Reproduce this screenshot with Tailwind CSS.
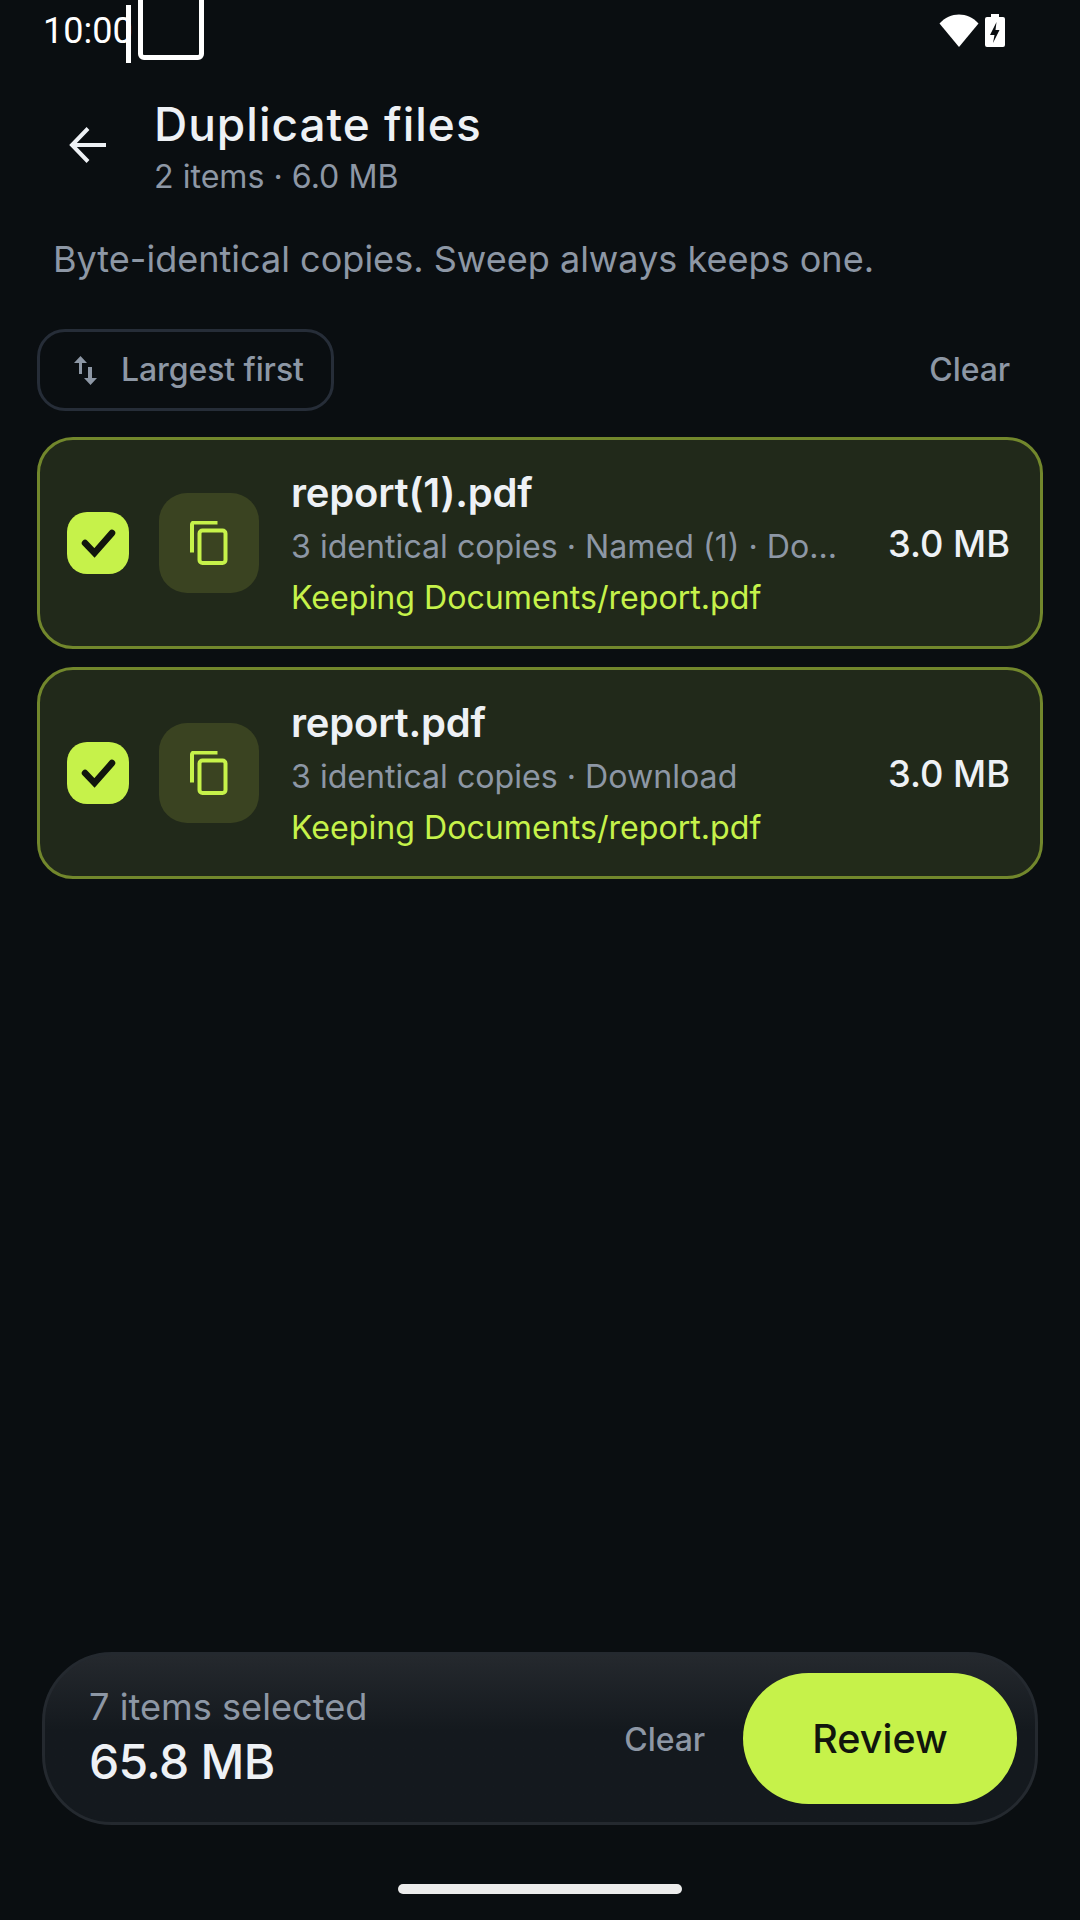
<!doctype html>
<html><head><meta charset="utf-8"><script src="https://cdn.jsdelivr.net/npm/@tailwindcss/browser@4"></script></head>
<body class="m-0">
<div class="relative flex flex-col w-[1080px] h-[1920px] overflow-hidden bg-[#0a0e11] font-['Inter',sans-serif]">
  <!-- status bar -->
  <div class="relative h-[76px] shrink-0 flex items-start justify-between pl-[43px] pr-[75px] text-white">
    <span class="font-['Roboto',sans-serif] text-[36px] leading-[62px]">10:00</span>
    <div class="absolute left-[126px] top-[5px] w-[5px] h-[58px] bg-white"></div>
    <div class="absolute left-[138px] top-[-10px] w-[66px] h-[70px] border-[5px] border-white rounded-[6px]"></div>
    <div class="flex items-start gap-[6px] pt-[14px]">
      <svg width="40" height="33" viewBox="0 0 40 33" class="block"><path d="M0.5 9.5 C11 -2.5 29 -2.5 39.5 9.5 L20 33 Z" fill="#fff"/></svg>
      <svg width="20" height="33" viewBox="0 0 20 33" class="block"><path d="M6 0H14V3H18A2 2 0 0 1 20 5V31A2 2 0 0 1 18 33H2A2 2 0 0 1 0 31V5A2 2 0 0 1 2 3H6Z" fill="#fff"/><path d="M11.5 8 L5 21 H9.5 L8 29 L14.5 16 H10.5 Z" fill="#0a0e11"/></svg>
    </div>
  </div>
  <!-- header -->
  <div class="flex items-start pt-[22px] shrink-0">
    <div class="w-[154px] shrink-0 pl-[69px] pt-[29px]">
      <svg width="37" height="37" viewBox="0 0 37 37" class="block"><path d="M37 18H3M19 1.500 L3 18 L19 34.500" fill="none" stroke="#eef1f5" stroke-width="4"/></svg>
    </div>
    <div class="flex flex-col">
      <span class="font-medium text-[46px] leading-[52px] text-[#eef1f5] tracking-[1px]">Duplicate files</span>
      <span class="mt-[7px] text-[32.15px] leading-[40px] text-[#8d97a5]">2 items · 6.0 MB</span>
    </div>
  </div>
  <p class="m-0 pl-[53px] pt-[40px] text-[36.05px] leading-[44px] text-[#8d97a5] shrink-0">Byte-identical copies. Sweep always keeps one.</p>
  <!-- controls -->
  <div class="flex items-center justify-between pl-[37px] pr-[70px] pt-[48px] shrink-0">
    <div class="flex items-center h-[82px] w-[297px] pl-[34px] gap-[24px] border-[3px] border-[#262d38] rounded-[28px]">
      <svg width="23" height="29" viewBox="0 0 23 29" class="block shrink-0"><path d="M0 7 L6.500 0 L13 7 H8 V18 H5 V7 Z M14 11 H18 V22 H23 L16.500 29 L10 22 H14 Z" fill="#8d97a5"/></svg>
      <span class="text-[32px] font-medium tracking-[-0.1px] text-[#8d97a5] whitespace-nowrap">Largest first</span>
    </div>
    <span class="text-[32px] font-medium tracking-[-0.1px] text-[#8d97a5]">Clear</span>
  </div>
  <!-- list -->
  <div class="flex flex-col gap-[18px] px-[37px] pt-[26px] shrink-0">
    <div class="flex items-center h-[212px] pl-[27px] pr-[30px] border-[3px] border-[#72872c] rounded-[36px] bg-[#21291a]">
      <div class="flex items-center justify-center w-[62px] h-[62px] rounded-[20px] bg-[#c6f24a] shrink-0">
        <svg width="38" height="30" viewBox="0 0 38 30" class="block"><path d="M6 15 L15.500 25 L33 5" fill="none" stroke="#11150d" stroke-width="6.500" stroke-linecap="round"/></svg>
      </div>
      <div class="flex items-center justify-center w-[100px] h-[100px] ml-[30px] rounded-[28px] bg-[#3a4321] shrink-0">
        <svg width="38" height="44" viewBox="0 0 38 44" class="block"><path d="M2 31.500V3.500A2 2 0 0 1 4 1.500H27.500" fill="none" stroke="#c6f24a" stroke-width="4"/><rect x="9.500" y="9.500" width="26" height="32.500" rx="3" fill="none" stroke="#c6f24a" stroke-width="4"/></svg>
      </div>
      <div class="flex flex-col min-w-0 flex-1 ml-[32px] pt-[5px]">
        <span class="text-[40px] leading-[50px] font-semibold text-[#eef1f5] tracking-[-0.2px]">report(1).pdf</span>
        <span class="mt-[3px] text-[32.15px] leading-[52px] text-[#8d97a5] whitespace-nowrap">3 identical copies · Named (1) · Do…</span>
        <span class="text-[32.15px] leading-[50px] text-[#c6f24a]">Keeping Documents/report.pdf</span>
      </div>
      <span class="pt-[3px] text-[36.3px] font-medium text-[#eef1f5] whitespace-nowrap shrink-0">3.0 MB</span>
    </div>
    <div class="flex items-center h-[212px] pl-[27px] pr-[30px] border-[3px] border-[#72872c] rounded-[36px] bg-[#21291a]">
      <div class="flex items-center justify-center w-[62px] h-[62px] rounded-[20px] bg-[#c6f24a] shrink-0">
        <svg width="38" height="30" viewBox="0 0 38 30" class="block"><path d="M6 15 L15.500 25 L33 5" fill="none" stroke="#11150d" stroke-width="6.500" stroke-linecap="round"/></svg>
      </div>
      <div class="flex items-center justify-center w-[100px] h-[100px] ml-[30px] rounded-[28px] bg-[#3a4321] shrink-0">
        <svg width="38" height="44" viewBox="0 0 38 44" class="block"><path d="M2 31.500V3.500A2 2 0 0 1 4 1.500H27.500" fill="none" stroke="#c6f24a" stroke-width="4"/><rect x="9.500" y="9.500" width="26" height="32.500" rx="3" fill="none" stroke="#c6f24a" stroke-width="4"/></svg>
      </div>
      <div class="flex flex-col min-w-0 flex-1 ml-[32px] pt-[5px]">
        <span class="text-[40px] leading-[50px] font-semibold text-[#eef1f5] tracking-[-0.2px]">report.pdf</span>
        <span class="mt-[3px] text-[32.15px] leading-[52px] text-[#8d97a5] whitespace-nowrap">3 identical copies · Download</span>
        <span class="text-[32.15px] leading-[50px] text-[#c6f24a]">Keeping Documents/report.pdf</span>
      </div>
      <span class="pt-[3px] text-[36.3px] font-medium text-[#eef1f5] whitespace-nowrap shrink-0">3.0 MB</span>
    </div>
  </div>
  <div class="flex-1"></div>
  <!-- bottom bar -->
  <div class="flex items-center h-[173px] mx-[42px] pl-[44px] pr-[18px] border-[3px] border-[#24292f] rounded-[70px] bg-gradient-to-b from-[#25292e] to-[#14191e] to-[45%] shrink-0">
    <div class="flex flex-col flex-1">
      <span class="text-[36.2px] leading-[42px] text-[#8d97a5]">7 items selected</span>
      <span class="mt-[4px] text-[48px] leading-[60px] font-medium text-[#eef1f5] tracking-[-0.7px]">65.8 MB</span>
    </div>
    <span class="pt-[3px] text-[32px] font-medium tracking-[-0.1px] text-[#8d97a5] mr-[38px]">Clear</span>
    <div class="flex items-center justify-center pt-[2px] w-[274px] h-[131px] rounded-full bg-[#c6f24a] text-[39.5px] font-[550] text-[#11150d]">Review</div>
  </div>
  <div class="h-[95px] shrink-0 flex justify-center pt-[59px]">
    <div class="w-[284px] h-[10px] rounded-full bg-[#ececec]"></div>
  </div>
</div>
</body></html>
